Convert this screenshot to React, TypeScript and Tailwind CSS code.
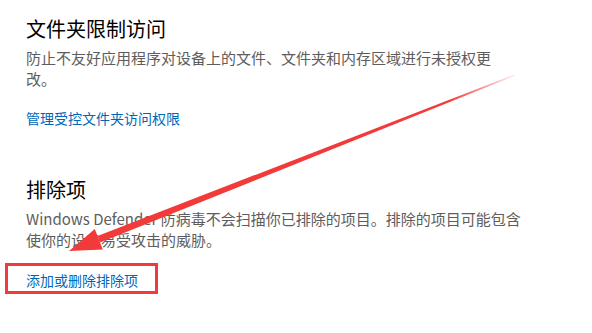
import React from "react";

const font = { fontFamily: '"Noto Sans CJK SC", "Noto Sans", sans-serif' };

function Section({
  title,
  body,
  link,
  className = "",
  linkClass = "",
}: {
  title: string;
  body: React.ReactNode;
  link: string;
  className?: string;
  linkClass?: string;
}) {
  return (
    <section className={className}>
      <h2 className="text-[20px] leading-[28px] text-black">{title}</h2>
      <p className="mt-[4px] whitespace-nowrap text-[15px] leading-[21px] text-[#5d5d5d]">{body}</p>
      <a className={`block text-[14px] leading-[20px] text-[#0067b8] ${linkClass}`}>{link}</a>
    </section>
  );
}

export default function App() {
  return (
    <div className="relative h-[333px] w-[592px] overflow-hidden bg-white" style={font}>
      <div className="flex flex-col pl-[26px] pt-[15px]">
        <Section
          title="文件夹限制访问"
          body={
            <>
              防止不友好应用程序对设备上的文件、文件夹和内存区域进行未授权更
              <br />
              改。
            </>
          }
          link="管理受控文件夹访问权限"
          linkClass="mt-[19px]"
        />
        <Section
          className="mt-[48px]"
          title="排除项"
          body={
            <>
              Windows Defender 防病毒不会扫描你已排除的项目。排除的项目可能包含
              <br />
              使你的设备易受攻击的威胁。
            </>
          }
          link="添加或删除排除项"
          linkClass="mt-[20px]"
        />
      </div>

      {/* annotation: red box */}
      <div className="pointer-events-none absolute left-[5px] top-[263px] h-[31px] w-[153px] border-[3px] border-[#f23a3a]" />

      {/* annotation: arrow */}
      <svg className="pointer-events-none absolute inset-0" width="592" height="333" viewBox="0 0 592 333">
        <defs>
          <linearGradient id="fade" x1="515" y1="75" x2="69" y2="251" gradientUnits="userSpaceOnUse">
            <stop offset="0" stopColor="#f23a3a" stopOpacity="0.1" />
            <stop offset="0.15" stopColor="#f23a3a" stopOpacity="1" />
            <stop offset="1" stopColor="#f23a3a" stopOpacity="1" />
          </linearGradient>
        </defs>
        <polygon points="515.3,75.6 514.7,74.4 97.5,236 100.1,242.6" fill="url(#fade)" />
        <polygon points="69,251 94.8,229.1 102.8,249.5" fill="#f23a3a" />
      </svg>
    </div>
  );
}
